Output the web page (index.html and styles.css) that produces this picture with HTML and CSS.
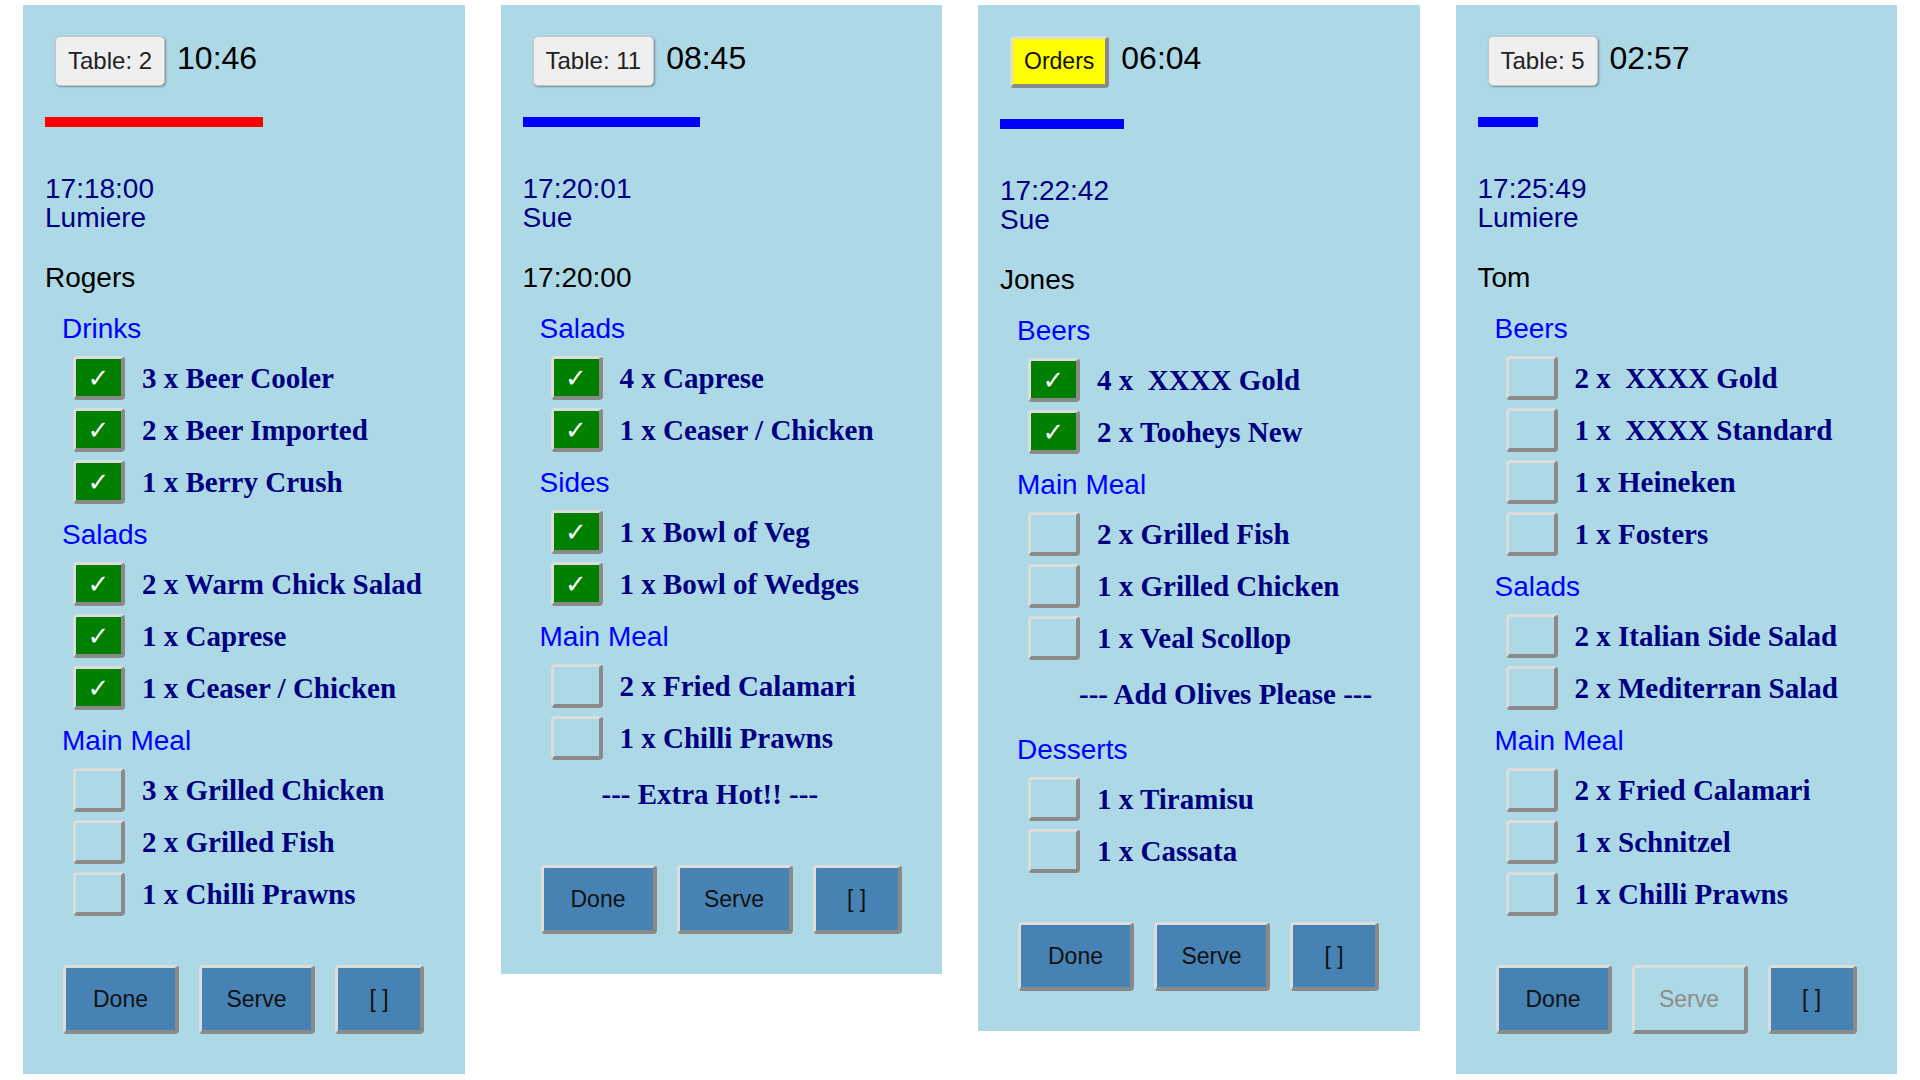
FILE: index.html
```html
<!DOCTYPE html>
<html lang="en">
<head>
  <meta charset="UTF-8" />
  <meta name="viewport" content="width=device-width, initial-scale=1.0"/>
  <title>Kitchen Orders</title>
  <link rel="stylesheet" href="styles.css">
</head>
<body>

<div class="board">

  <div class="ticket">
    <div class="ticket-head">
      <button class="table-btn">Table: 2</button>
      <span class="elapsed">10:46</span>
    </div>
    <div class="age-bar late" style="width:218px"></div>
    <div class="placed">17:18:00<br>Lumiere</div>
    <div class="customer">Rogers</div>
    <div class="course">
      <div class="course-name">Drinks</div>
      <div class="item"><span class="box ticked">✓</span><span class="item-name">3 x Beer Cooler</span></div>
      <div class="item"><span class="box ticked">✓</span><span class="item-name">2 x Beer Imported</span></div>
      <div class="item"><span class="box ticked">✓</span><span class="item-name">1 x Berry Crush</span></div>
    </div>
    <div class="course">
      <div class="course-name">Salads</div>
      <div class="item"><span class="box ticked">✓</span><span class="item-name">2 x Warm Chick Salad</span></div>
      <div class="item"><span class="box ticked">✓</span><span class="item-name">1 x Caprese</span></div>
      <div class="item"><span class="box ticked">✓</span><span class="item-name">1 x Ceaser / Chicken</span></div>
    </div>
    <div class="course">
      <div class="course-name">Main Meal</div>
      <div class="item"><span class="box"></span><span class="item-name">3 x Grilled Chicken</span></div>
      <div class="item"><span class="box"></span><span class="item-name">2 x Grilled Fish</span></div>
      <div class="item"><span class="box"></span><span class="item-name">1 x Chilli Prawns</span></div>
    </div>
    <div class="actions">
      <button class="act wide">Done</button>
      <button class="act wide">Serve</button>
      <button class="act narrow">[ ]</button>
    </div>
  </div>

  <div class="ticket">
    <div class="ticket-head">
      <button class="table-btn">Table: 11</button>
      <span class="elapsed">08:45</span>
    </div>
    <div class="age-bar" style="width:177px"></div>
    <div class="placed">17:20:01<br>Sue</div>
    <div class="customer">17:20:00</div>
    <div class="course">
      <div class="course-name">Salads</div>
      <div class="item"><span class="box ticked">✓</span><span class="item-name">4 x Caprese</span></div>
      <div class="item"><span class="box ticked">✓</span><span class="item-name">1 x Ceaser / Chicken</span></div>
    </div>
    <div class="course">
      <div class="course-name">Sides</div>
      <div class="item"><span class="box ticked">✓</span><span class="item-name">1 x Bowl of Veg</span></div>
      <div class="item"><span class="box ticked">✓</span><span class="item-name">1 x Bowl of Wedges</span></div>
    </div>
    <div class="course">
      <div class="course-name">Main Meal</div>
      <div class="item"><span class="box"></span><span class="item-name">2 x Fried Calamari</span></div>
      <div class="item"><span class="box"></span><span class="item-name">1 x Chilli Prawns</span></div>
      <div class="note">--- Extra Hot!! ---</div>
    </div>
    <div class="actions">
      <button class="act wide">Done</button>
      <button class="act wide">Serve</button>
      <button class="act narrow">[ ]</button>
    </div>
  </div>

  <div class="ticket">
    <div class="ticket-head">
      <button class="orders-btn">Orders</button>
      <span class="elapsed">06:04</span>
    </div>
    <div class="age-bar" style="width:124px"></div>
    <div class="placed">17:22:42<br>Sue</div>
    <div class="customer">Jones</div>
    <div class="course">
      <div class="course-name">Beers</div>
      <div class="item"><span class="box ticked">✓</span><span class="item-name">4 x&nbsp; XXXX Gold</span></div>
      <div class="item"><span class="box ticked">✓</span><span class="item-name">2 x Tooheys New</span></div>
    </div>
    <div class="course">
      <div class="course-name">Main Meal</div>
      <div class="item"><span class="box"></span><span class="item-name">2 x Grilled Fish</span></div>
      <div class="item"><span class="box"></span><span class="item-name">1 x Grilled Chicken</span></div>
      <div class="item"><span class="box"></span><span class="item-name">1 x Veal Scollop</span></div>
      <div class="note">--- Add Olives Please ---</div>
    </div>
    <div class="course">
      <div class="course-name">Desserts</div>
      <div class="item"><span class="box"></span><span class="item-name">1 x Tiramisu</span></div>
      <div class="item"><span class="box"></span><span class="item-name">1 x Cassata</span></div>
    </div>
    <div class="actions">
      <button class="act wide">Done</button>
      <button class="act wide">Serve</button>
      <button class="act narrow">[ ]</button>
    </div>
  </div>

  <div class="ticket">
    <div class="ticket-head">
      <button class="table-btn">Table: 5</button>
      <span class="elapsed">02:57</span>
    </div>
    <div class="age-bar" style="width:60px"></div>
    <div class="placed">17:25:49<br>Lumiere</div>
    <div class="customer">Tom</div>
    <div class="course">
      <div class="course-name">Beers</div>
      <div class="item"><span class="box"></span><span class="item-name">2 x&nbsp; XXXX Gold</span></div>
      <div class="item"><span class="box"></span><span class="item-name">1 x&nbsp; XXXX Standard</span></div>
      <div class="item"><span class="box"></span><span class="item-name">1 x Heineken</span></div>
      <div class="item"><span class="box"></span><span class="item-name">1 x Fosters</span></div>
    </div>
    <div class="course">
      <div class="course-name">Salads</div>
      <div class="item"><span class="box"></span><span class="item-name">2 x Italian Side Salad</span></div>
      <div class="item"><span class="box"></span><span class="item-name">2 x Mediterran Salad</span></div>
    </div>
    <div class="course">
      <div class="course-name">Main Meal</div>
      <div class="item"><span class="box"></span><span class="item-name">2 x Fried Calamari</span></div>
      <div class="item"><span class="box"></span><span class="item-name">1 x Schnitzel</span></div>
      <div class="item"><span class="box"></span><span class="item-name">1 x Chilli Prawns</span></div>
    </div>
    <div class="actions">
      <button class="act wide">Done</button>
      <button class="act wide" disabled>Serve</button>
      <button class="act narrow">[ ]</button>
    </div>
  </div>

</div>

</body>
</html>
```

FILE: styles.css
```css
  body {
    margin: 0;
    background: #ffffff;
    font-family: 'Liberation Sans', Arial, sans-serif;
  }
  .board {
    display: flex;
    align-items: flex-start;
    gap: 36px;
    padding: 5px 0 0 23px;
  }
  .ticket {
    width: 441.5px;
    box-sizing: border-box;
    background: #add8e6;
    padding: 31px 0 40px 22px;
  }
  .ticket-head {
    display: flex;
    align-items: baseline;
    gap: 12px;
    margin-left: 10px;
  }
  .table-btn {
    height: 50px;
    padding: 0 12px;
    font-family: 'Liberation Sans', Arial, sans-serif;
    font-size: 24px;
    color: #222;
    background: #efefef;
    border: 1px solid #c4c4c4;
    border-radius: 5px;
    box-shadow: 1px 1px 2px rgba(0,0,0,0.35);
  }
  .orders-btn {
    height: 52px;
    padding: 0 11px;
    font-family: 'Liberation Sans', Arial, sans-serif;
    font-size: 23px;
    color: #111;
    background: #ffff00;
    border-style: solid;
    border-width: 3px 4px 4px 3px;
    border-color: #dcdcdc #8a8a8a #8a8a8a #dcdcdc;
    border-radius: 4px;
  }
  .elapsed {
    font-size: 32px;
    color: #000;
  }
  .age-bar {
    height: 10px;
    margin-top: 31px;
    background: #0000ff;
  }
  .age-bar.late {
    background: #ff0000;
  }
  .placed {
    margin-top: 47px;
    font-size: 28px;
    line-height: 29px;
    color: #000080;
  }
  .customer {
    margin-top: 31px;
    margin-bottom: 22px;
    font-size: 28px;
    line-height: 29px;
    color: #000;
  }
  .course {
    margin-top: 16px;
    display: flex;
    flex-direction: column;
    gap: 8px;
  }
  .course:has(.note) + .course {
    margin-top: 19px;
  }
  .course-name {
    margin-left: 17px;
    margin-bottom: 5px;
    font-size: 28px;
    line-height: 29px;
    color: #0000ff;
  }
  .item {
    display: flex;
    align-items: center;
    gap: 17px;
    height: 44px;
    margin-left: 28px;
  }
  .box {
    width: 45px;
    height: 37px;
    display: flex;
    align-items: center;
    justify-content: center;
    border-style: solid;
    border-width: 3px 4px 4px 3px;
    border-color: #dcdcdc #8a8a8a #8a8a8a #dcdcdc;
    border-radius: 4px;
    font-family: 'DejaVu Sans', sans-serif;
    font-size: 26px;
    color: #fff;
  }
  .box.ticked {
    background: #008000;
  }
  .item-name {
    font-family: 'Liberation Serif', 'Times New Roman', serif;
    font-weight: bold;
    font-size: 29px;
    line-height: 44px;
    color: #000080;
  }
  .note {
    height: 44px;
    margin-top: 4px;
    margin-left: 79px;
    font-family: 'Liberation Serif', 'Times New Roman', serif;
    font-weight: bold;
    font-size: 29px;
    line-height: 44px;
    color: #000080;
  }
  .actions {
    display: flex;
    gap: 20px;
    margin-top: 49px;
    margin-left: 18px;
  }
  .act {
    height: 69px;
    font-family: 'Liberation Sans', Arial, sans-serif;
    font-size: 23px;
    color: #111;
    background: #4682b4;
    border-style: solid;
    border-width: 3px 4px 4px 3px;
    border-color: #dcdcdc #8a8a8a #8a8a8a #dcdcdc;
    border-radius: 4px;
  }
  .act.wide { width: 116px; }
  .act.narrow { width: 89px; }
  .act:disabled {
    background: #add8e6;
    color: #8c8c8c;
  }
```
